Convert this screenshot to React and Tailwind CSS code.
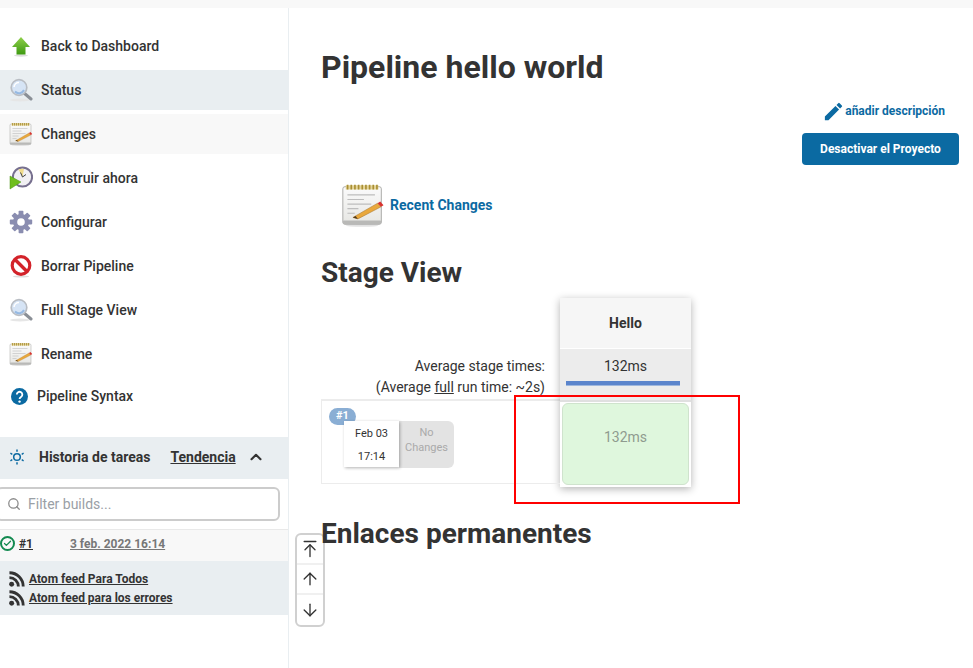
import React from "react";
import { ArrowUp, ArrowDown, ArrowUpToLine, ChevronUp, Search, Check } from "lucide-react";

const Magnifier = () => (
  <svg viewBox="0 0 24 24" className="w-6 h-6">
    <ellipse cx="11" cy="22" rx="10" ry="1.4" fill="#e6e6e6" />
    <path d="M15 15 L22 21" stroke="#8a8f96" strokeWidth="3" strokeLinecap="round" />
    <circle cx="10" cy="9.5" r="7.8" fill="#d6e4f5" stroke="#b9bdc3" strokeWidth="1.7" />
    <path d="M5 9 A5 5 0 0 1 10 4.5" fill="none" stroke="#fff" strokeWidth="1.5" />
    <path d="M6 13.5 A5.5 5.5 0 0 0 15 12" fill="none" stroke="#96b9e2" strokeWidth="2" />
  </svg>
);
const Notepad = ({ cls = "w-6 h-6" }) => (
  <svg viewBox="0 0 24 24" className={cls}>
    <defs>
      <linearGradient id="pg" x1="0" y1="0" x2="0" y2="1">
        <stop offset="0" stopColor="#fbfbfb" />
        <stop offset="1" stopColor="#e6e6e3" />
      </linearGradient>
    </defs>
    <ellipse cx="11.5" cy="23.2" rx="9" ry="0.7" fill="#e2e2e2" />
    <rect x="1" y="2" width="21" height="20.5" rx="1.2" fill="url(#pg)" stroke="#a5a5a3" strokeWidth="0.5" />
    <rect x="1" y="20.5" width="21" height="2" rx="0.8" fill="#b9b9b7" />
    <path d="M2.6 1.2h17.8v2.4H2.6z" fill="#e5d59a" />
    <path d="M3.6 1v2.6M5.6 1v2.6M7.6 1v2.6M9.6 1v2.6M11.6 1v2.6M13.6 1v2.6M15.6 1v2.6M17.6 1v2.6M19.6 1v2.6" stroke="#a98f34" strokeWidth="0.9" />
    <path d="M3.5 6.5h15M3.5 9h9M3.5 11.5h13M3.5 14h6M3.5 16.5h4" stroke="#bdbdbd" strokeWidth="0.6" />
    <path d="M6.5 18.8 L20 11 L21.8 13 L9.2 19.6 Z" fill="#e9a83c" stroke="#a9752a" strokeWidth="0.3" />
    <path d="M6.5 18.8 L8 18 L9.2 19.6 Z" fill="#4d3a20" />
    <path d="M20 11 L21.4 10.1 L23.2 12.1 L21.8 13 Z" fill="#d8322f" />
  </svg>
);
const ArrowGreen = () => (
  <svg viewBox="0 0 24 24" className="w-6 h-6">
    <defs>
      <linearGradient id="ag" x1="0" y1="0" x2="0" y2="1">
        <stop offset="0" stopColor="#8fd04a" />
        <stop offset="1" stopColor="#3e9a12" />
      </linearGradient>
    </defs>
    <ellipse cx="12" cy="21.5" rx="7" ry="1.2" fill="#ddd" />
    <path d="M12 3 L21 13 H16.5 V20.5 H7.5 V13 H3 Z" fill="url(#ag)" />
  </svg>
);
const ClockPlay = () => (
  <svg viewBox="0 0 24 24" className="w-6 h-6">
    <circle cx="13.5" cy="11" r="9.6" fill="#f1f0f3" stroke="#77708f" strokeWidth="2" />
    <path d="M13.5 11 L9.5 3.5 A8.4 8.4 0 0 1 15 3 Z" fill="#f1dc8c" />
    <path d="M13.5 11 L17 8.5M13.5 11 L11.5 6.5" stroke="#444" strokeWidth="1" />
    <path d="M1 10 L12 16 L1 23 Z" fill="#6fbe1e" stroke="#4b9212" strokeWidth="0.5" />
  </svg>
);
const Gear = () => (
  <svg viewBox="0 0 24 24" className="w-6 h-6">
    <g fill="#8a8db0">
      <circle cx="12" cy="12" r="8" />
      {[0, 45, 90, 135, 180, 225, 270, 315].map((a) => (
        <rect key={a} x="9.6" y="0.8" width="4.8" height="5" rx="0.8" transform={`rotate(${a} 12 12)`} />
      ))}
    </g>
    <circle cx="12" cy="12" r="3.8" fill="#fff" />
  </svg>
);
const Forbidden = () => (
  <svg viewBox="0 0 24 24" className="w-6 h-6">
    <ellipse cx="12" cy="22.5" rx="8" ry="1" fill="#ddd" />
    <circle cx="12" cy="11.5" r="8.8" fill="#fff" stroke="#d3232a" strokeWidth="3.2" />
    <path d="M6 5.5 L18 17.5" stroke="#d3232a" strokeWidth="3.4" />
  </svg>
);
const Help = () => (
  <svg viewBox="0 0 24 24" className="w-[17px] h-[17px]">
    <circle cx="12" cy="12" r="12" fill="#0b6aa2" />
    <path d="M8.2 9.3 A3.9 3.9 0 1 1 14.4 12.4 C12.9 13.4 12.1 14 12.1 15.6" fill="none" stroke="#fff" strokeWidth="2.6" />
    <circle cx="12.1" cy="19.2" r="1.7" fill="#fff" />
  </svg>
);
const Pencil = () => (
  <svg viewBox="0 0 24 24" className="w-[23px] h-[23px]" fill="#0b6aa2">
    <path d="M3 17.25V21h3.75L17.81 9.94l-3.75-3.75L3 17.25zM20.71 7.04a1 1 0 0 0 0-1.41l-2.34-2.34a1 1 0 0 0-1.41 0l-1.83 1.83 3.75 3.75 1.83-1.83z" />
  </svg>
);
const HistoryIcon = () => (
  <svg viewBox="0 0 16 16" className="w-4 h-4" fill="none" stroke="#0b6aa2">
    <circle cx="8" cy="8" r="3.3" strokeWidth="1.5" />
    <path d="M8 0.5v2.2M8 13.3v2.2M1.4 4.2l1.9 1.1M12.7 10.7l1.9 1.1M1.4 11.8l1.9-1.1M12.7 5.3l1.9-1.1" strokeWidth="1.5" />
  </svg>
);
const Rss = () => (
  <svg viewBox="0 0 18 18" className="w-4 h-4 shrink-0" fill="none" stroke="#333">
    <circle cx="3" cy="15" r="2.8" fill="#333" stroke="none" />
    <path d="M0.5 7.5 A10 10 0 0 1 10.5 17.5" strokeWidth="3.2" />
    <path d="M0.5 2 A15.5 15.5 0 0 1 16 17.5" strokeWidth="3.2" />
  </svg>
);

const Item = ({ icon, label, cls = "" }) => (
  <div className={`h-10 flex items-center pl-[9px] gap-2 ${cls}`}>
    <span className="w-6 h-6 shrink-0 flex items-center justify-center">{icon}</span>
    <span className="text-sm font-medium text-[#333]">{label}</span>
  </div>
);

export default function App() {
  return (
    <div className="relative w-[973px] h-[668px] overflow-hidden bg-white text-[#333] font-['Roboto',sans-serif]">
      <div className="h-2 bg-[#f8f8f8]" />
      <div className="flex h-[660px]">
        <aside className="w-[289px] shrink-0 border-r border-[#e9eef1] pt-[18px]">
          <div className="flex flex-col gap-1">
            <Item icon={<ArrowGreen />} label="Back to Dashboard" />
            <Item icon={<Magnifier />} label="Status" cls="bg-[#e9eef1]" />
            <Item icon={<Notepad />} label="Changes" cls="bg-[#f8f8f8]" />
            <Item icon={<ClockPlay />} label="Construir ahora" />
            <Item icon={<Gear />} label="Configurar" />
            <Item icon={<Forbidden />} label="Borrar Pipeline" />
            <Item icon={<Magnifier />} label="Full Stage View" />
            <Item icon={<Notepad />} label="Rename" />
          </div>
          <div className="h-[34px] mt-[5px] flex items-center pl-[11px] gap-[9px]">
            <Help />
            <span className="text-sm font-medium text-[#333]">Pipeline Syntax</span>
          </div>
          <div className="mt-[24px] h-[42px] bg-[#e9eef1] flex items-center pl-[9px] pb-[2px]">
            <HistoryIcon />
            <span className="ml-[14px] text-sm font-bold">Historia de tareas</span>
            <span className="ml-[20px] text-sm font-bold underline">Tendencia</span>
            <ChevronUp className="ml-[11px] w-[18px] h-[18px]" strokeWidth={2.8} />
          </div>
          <div className="mt-2 -ml-1 w-[284px] h-[34px] border-2 border-[#ccc] rounded-md flex items-center pl-[9px] gap-[7px]">
            <Search className="w-[14px] h-[14px] text-[#8c8c8c]" strokeWidth={2.2} />
            <span className="text-sm text-[#9aa0a6]">Filter builds...</span>
          </div>
          <div className="mt-2 h-[32px] bg-[#f8f8f8] border-t border-[#e9e9e9] flex items-center pb-1">
            <span className="w-[15px] h-[15px] rounded-full border-2 border-[#138a50] flex items-center justify-center">
              <Check className="w-[9px] h-[9px] text-[#138a50]" strokeWidth={3.5} />
            </span>
            <span className="ml-1 text-xs font-bold underline">#1</span>
            <span className="ml-[37px] text-xs font-bold underline text-[#777]">3 feb. 2022 16:14</span>
          </div>
          <div className="h-[54px] bg-[#e9eef1] pl-[9px] pt-[10px] flex flex-col gap-[3px]">
            <div className="flex items-center gap-1 h-4">
              <Rss />
              <span className="text-xs font-bold underline">Atom feed Para Todos</span>
            </div>
            <div className="flex items-center gap-1 h-4">
              <Rss />
              <span className="text-xs font-bold underline">Atom feed para los errores</span>
            </div>
          </div>
        </aside>

        <main className="relative z-10 flex-1 pl-8 pr-[14px]">
          <h1 className="mt-[38px] text-[32px] leading-[42px] font-bold text-[#333]">Pipeline hello world</h1>
          <div className="mt-[13px] flex justify-end items-center pr-[14px] h-5">
            <Pencil />
            <span className="text-xs font-bold text-[#0b6aa2]">añadir descripción</span>
          </div>
          <div className="mt-3 flex justify-end">
            <div className="w-[157px] h-8 rounded bg-[#0b6aa2] text-white text-xs font-bold flex items-center justify-center">
              Desactivar el Proyecto
            </div>
          </div>
          <div className="mt-[18px] ml-5 flex items-center gap-[5px] h-[44px]">
            <Notepad cls="w-11 h-11" />
            <span className="text-sm font-bold text-[#0b6aa2]">Recent Changes</span>
          </div>
          <h2 className="mt-[28px] text-[28px] leading-[36px] font-bold text-[#333]">Stage View</h2>
          <div className="mt-[7px] flex items-start">
            <div className="w-[239px] shrink-0 pt-[52px]">
              <div className="h-[51px] pr-[15px] text-right text-sm leading-[21px] pt-[6px] text-[#333] border-b-2 border-[#ececec]">
                <div>Average stage times:</div>
                <div>
                  (Average <span className="underline">full</span> run time: ~2s)
                </div>
              </div>
              <div className="relative h-[83px] border border-t-0 border-r-0 border-[#ececec]">
                <div className="absolute left-[7px] top-[7px] w-[27px] h-[17px] rounded-full bg-[#8aaed4] text-white text-[11px] font-bold flex items-center justify-center">
                  #1
                </div>
                <div className="absolute left-[22px] top-5 w-[55px] h-[46px] bg-white shadow-[1px_1px_3px_rgba(0,0,0,0.3)] flex flex-col items-center justify-between pt-[5px] pb-[2px] text-[11px] leading-[16px] text-[#333] z-10">
                  <span>Feb 03</span>
                  <span>17:14</span>
                </div>
                <div className="absolute left-[77px] top-5 w-[55px] h-[47px] rounded-r-md bg-[#e3e3e3] text-[11px] leading-[15px] text-[#aaa] flex flex-col items-center pt-1">
                  <span>No</span>
                  <span>Changes</span>
                </div>
              </div>
            </div>
            <div className="w-[131px] h-[189px] shrink-0 bg-white shadow-[0_2px_8px_rgba(0,0,0,0.3)] flex flex-col">
              <div className="h-[50px] bg-[#f6f6f6] flex items-center justify-center text-sm font-bold">Hello</div>
              <div className="h-[51px] mt-px bg-[#ececec] px-[6px] pt-[6px] text-center text-sm leading-[22px]">
                132ms
                <div className="mt-1 w-[114px] h-[5px] bg-[#5b85cc] border-b border-[#9fb7dd]" />
              </div>
              <div className="h-[2px] bg-[#e0e0e0]" />
              <div className="mx-[2px] mt-[1px] h-[82px] rounded-md bg-[#dff7dd] border border-[#cfe3cd] flex items-start justify-center pt-[23px] text-sm leading-5 text-[#8f9b8f]">
                132ms
              </div>
            </div>
          </div>
          <h2 className="mt-[29px] text-[28px] leading-[36px] font-bold text-[#333]">Enlaces permanentes</h2>
        </main>
      </div>

      <div className="absolute left-[295px] top-[533px] w-[30px] h-[94px] border-2 border-[#d0d0d0] rounded-md bg-white flex flex-col items-center">
        <div className="h-[30px] w-full flex items-center justify-center border-b-2 border-[#f0f0f0]">
          <ArrowUpToLine className="w-5 h-5 text-[#333]" strokeWidth={1.6} />
        </div>
        <div className="h-[30px] w-full flex items-center justify-center border-b-2 border-[#f0f0f0]">
          <ArrowUp className="w-5 h-5 text-[#333]" strokeWidth={1.6} />
        </div>
        <div className="flex-1 w-full flex items-center justify-center">
          <ArrowDown className="w-5 h-5 text-[#333]" strokeWidth={1.6} />
        </div>
      </div>

      <div className="absolute z-20 left-[514px] top-[395px] w-[226px] h-[109px] border-2 border-[#f00] pointer-events-none" />
    </div>
  );
}
